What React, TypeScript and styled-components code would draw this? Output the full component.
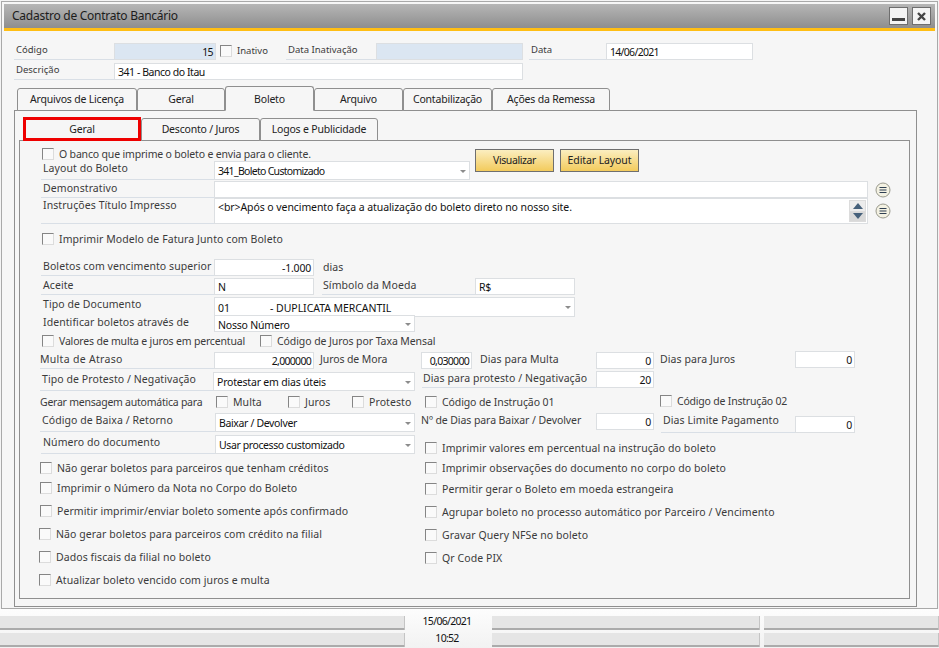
import React from "react";
import styled, { createGlobalStyle } from "styled-components";

const Global = createGlobalStyle`
  html, body { margin: 0; padding: 0; background: #f4f4f4; overflow: hidden; }
  * { box-sizing: border-box; }
  body { font-family: "Noto Sans", "Liberation Sans", sans-serif; font-size: 10.5px; color: #333; }
`;

const Page = styled.div`
  width: 939px; height: 648px; display: flex; flex-direction: column; background: #f4f4f4;
`;
const Win = styled.div`
  width: 937px; height: 608px; margin: 1px 0 0 1px; border: 1px solid #a9a9a9; padding: 2px;
  background: #f6f6f6; flex: none; display: flex; flex-direction: column;
`;
const TitleBar = styled.div`
  height: 27px; flex: none; padding: 0 4px 0 8px; display: flex; align-items: center; gap: 4px;
  background: linear-gradient(#b6b6b6, #8e8e8e); border-bottom: 3px solid #ffbe14;
`;
const Title = styled.div`
  flex: 1; font-size: 12px; color: #1c1c1c; padding-bottom: 1px; letter-spacing: -0.26px;
`;
const WinBtn = styled.div`
  width: 19px; height: 18px; border: 1px solid #6e6e6e; background: #f4f4f4;
  display: flex; align-items: center; justify-content: center;
`;
const Body = styled.div`
  flex: 1; padding: 12px 0 0 10px; display: flex; flex-direction: column;
`;
const Row = styled.div<{ $h: number; $mt?: number; $pl?: number }>`
  display: flex; align-items: flex-start; flex: none;
  height: ${p => p.$h}px; margin-top: ${p => p.$mt ?? 0}px; padding-left: ${p => p.$pl ?? 0}px;
`;
const Label = styled.div<{ $w: number; $h?: number; $ml?: number; $pl?: number; $plain?: boolean; $mt?: number; $small?: boolean; $ls?: number }>`
  width: ${p => p.$w}px; flex: none; height: ${p => p.$h ?? 17}px;
  margin-left: ${p => p.$ml ?? 0}px; margin-top: ${p => p.$mt ?? 0}px;
  padding-left: ${p => p.$pl ?? 2}px; line-height: 14px; white-space: nowrap; color: #3b3b3b;
  font-size: ${p => (p.$small ? 9.5 : 10.5)}px;
  letter-spacing: ${p => p.$ls ?? (p.$small ? 0 : 0.08)}px;
  border-bottom: 1px solid ${p => (p.$plain ? "transparent" : "#d9dfe6")};
`;
const Field = styled.div<{ $w: number; $h?: number; $right?: boolean; $blue?: boolean; $mt?: number; $ml?: number; $ls?: number; $lh?: number }>`
  position: relative; width: ${p => p.$w}px; height: ${p => p.$h ?? 17}px; flex: none;
  margin-top: ${p => p.$mt ?? 0}px; margin-left: ${p => p.$ml ?? 0}px;
  background: ${p => (p.$blue ? "#dbe6f2" : "#fff")}; border: 1px solid #dcdfe2;
  padding: ${p => (p.$right ? "0 2px 0 0" : "0 0 0 3px")}; text-align: ${p => (p.$right ? "right" : "left")};
  font-size: 10.5px; line-height: ${p => p.$lh ?? p.$h ?? 17}px; color: #111; white-space: pre;
  letter-spacing: ${p => p.$ls ?? -0.2}px;
`;
const Arrow = styled.i`
  position: absolute; right: 3px; top: 50%; margin-top: -1px; width: 0; height: 0;
  border-left: 3px solid transparent; border-right: 3px solid transparent; border-top: 3px solid #8c8c8c;
`;
const Box = styled.span`
  width: 12px; height: 12px; flex: none; background: #fafafa;
  border: 1px solid #dcdcdc; border-top-color: #858585; border-left-color: #858585;
`;
const Check = styled.label<{ $w?: number; $ml?: number; $mt?: number; $small?: boolean; $ls?: number }>`
  display: flex; align-items: center; gap: 5px; height: 14px; flex: none;
  width: ${p => (p.$w ? `${p.$w}px` : "auto")};
  margin-left: ${p => p.$ml ?? 0}px; margin-top: ${p => p.$mt ?? 0}px;
  white-space: nowrap; color: #3b3b3b; line-height: 14px;
  font-size: ${p => (p.$small ? 9.5 : 10.5)}px;
  letter-spacing: ${p => p.$ls ?? (p.$small ? 0 : 0.08)}px;
`;
const TabBar = styled.div<{ $ml: number; $h: number }>`
  display: flex; align-items: flex-end; flex: none; height: ${p => p.$h}px; margin-left: ${p => p.$ml}px;
  position: relative; z-index: 1; margin-bottom: -1px;
`;
const Tab = styled.div<{ $w: number; $active?: boolean }>`
  width: ${p => p.$w}px; height: ${p => (p.$active ? 25 : 23)}px; flex: none;
  border: 1px solid #8f8f8f; border-radius: 3px 3px 0 0; background: #f6f6f6;
  ${p => (p.$active ? "border-bottom-color: #f6f6f6;" : "")}
  text-align: center; line-height: ${p => (p.$active ? 25 : 21)}px; color: #222; letter-spacing: -0.2px;
`;
const SubTab = styled.div<{ $w: number; $marked?: boolean }>`
  width: ${p => p.$w}px; height: ${p => (p.$marked ? 24 : 23)}px; flex: none; background: #f6f6f6;
  border: ${p => (p.$marked ? "3px solid #ee0000" : "1px solid #8f8f8f")};
  border-radius: ${p => (p.$marked ? "0" : "3px 3px 0 0")};
  text-align: center; line-height: ${p => (p.$marked ? 18 : 21)}px; color: #222; letter-spacing: -0.2px;
`;
const Panel = styled.div`
  width: 903px; height: 497px; flex: none; border: 1px solid #8f8f8f; background: #f6f6f6; padding-top: 7px;
`;
const Inner = styled.div`
  width: 891px; height: 459px; margin-left: 4px; border: 1px solid #8f8f8f; padding-left: 0;
  display: flex; flex-direction: column;
`;
const TopBlock = styled.div`
  display: flex; flex: none;
`;
const TopLeft = styled.div`
  width: 450px; flex: none; display: flex; flex-direction: column;
`;
const Btn = styled.div<{ $w: number; $ml: number; $ls?: number }>`
  width: ${p => p.$w}px; margin-left: ${p => p.$ml}px; margin-top: 8px; height: 23px;
  border: 1px solid #6f6f6f; background: linear-gradient(#fbeec0, #f3cb5c);
  text-align: center; line-height: 21px; color: #222; flex: none; letter-spacing: ${p => p.$ls ?? -0.1}px;
`;
const Round = styled.svg`
  width: 16px; height: 16px; margin-left: 7px; flex: none; align-self: center;
`;
const Scroll = styled.div`
  position: absolute; right: 1px; top: 1px; bottom: 1px; width: 17px; display: flex; flex-direction: column;
  gap: 1px; background: #dcdcdc; padding: 1px;
`;
const ScrollBtn = styled.div<{ $down?: boolean }>`
  flex: 1; display: flex; align-items: center; justify-content: center;
  background: ${p => (p.$down ? "#d9d9d9" : "#ececec")};
  &::after {
    content: ""; width: 0; height: 0; border-left: 5px solid transparent; border-right: 5px solid transparent;
    ${p => (p.$down ? "border-top: 6px solid #45607a;" : "border-bottom: 6px solid #45607a;")}
  }
`;
const Note = styled.span<{ $ml: number; $mt?: number }>`
  margin-left: ${p => p.$ml}px; margin-top: ${p => p.$mt ?? 0}px; color: #3b3b3b; letter-spacing: 0.08px; line-height: 14px;
`;
const Split = styled.div`
  display: flex; flex: none;
`;
const Column = styled.div<{ $w: number; $ml?: number }>`
  width: ${p => p.$w}px; margin-left: ${p => p.$ml ?? 0}px; flex: none; display: flex; flex-direction: column;
`;
const Status = styled.div`
  flex: 1; padding-top: 7px; background: linear-gradient(#fdfdfd, #f2f2f2);
  display: flex; flex-direction: column; gap: 3px;
`;
const StatusRow = styled.div`
  display: flex; height: 14px; flex: none;
`;
const Cell = styled.div<{ $w: number; $ml?: number }>`
  width: ${p => p.$w}px; margin-left: ${p => p.$ml ?? 0}px; flex: none; background: #e5e5e5;
  border-bottom: 2px solid #ababab; border-right: 1px solid #c4c4c4; border-radius: 0 0 1px 0;
`;
const Clock = styled.div`
  width: 87px; padding-right: 3px; flex: none; text-align: center; line-height: 10px; font-size: 10.5px; color: #111; letter-spacing: -0.7px;
`;

const Dots = () => (
  <Round viewBox="0 0 16 16">
    <circle cx="8" cy="8" r="7" fill="#f3f1e2" stroke="#9a9a8e" />
    <path d="M4.5 5.5h7M4.5 8h7M4.5 10.5h7" stroke="#2f3f52" strokeWidth="1.1" />
  </Round>
);
const Cb = ({ children, ...rest }: React.ComponentProps<typeof Check>) => (
  <Check {...rest}><Box />{children}</Check>
);

export default function App() {
  return (
    <Page>
      <Global />
      <Win>
        <TitleBar>
          <Title>Cadastro de Contrato Bancário</Title>
          <WinBtn>
            <svg width="15" height="15" viewBox="0 0 15 15"><rect x="1" y="9" width="13" height="3" fill="#444" /></svg>
          </WinBtn>
          <WinBtn>
            <svg width="13" height="13" viewBox="0 0 13 13"><path d="M3 3l7 7M10 3l-7 7" stroke="#444" strokeWidth="2.4" /></svg>
          </WinBtn>
        </TitleBar>
        <Body>
          <Row $h={17}>
            <Label $w={100} $small>Código</Label>
            <Field $w={102} $blue $right $ls={-0.6}>15</Field>
            <Cb $w={66} $ml={4} $mt={1} $small>Inativo</Cb>
            <Label $w={90} $small>Data Inativação</Label>
            <Field $w={147} $blue />
            <Label $w={77} $ml={6} $small>Data</Label>
            <Field $w={147} $ls={-0.7}>14/06/2021</Field>
          </Row>
          <Row $h={17} $mt={3}>
            <Label $w={100} $small>Descrição</Label>
            <Field $w={409} $ls={-0.45}>341 - Banco do Itau</Field>
          </Row>
          <TabBar $ml={3} $h={31}>
            <Tab $w={120}>Arquivos de Licença</Tab>
            <Tab $w={88}>Geral</Tab>
            <Tab $w={89} $active>Boleto</Tab>
            <Tab $w={89}>Arquivo</Tab>
            <Tab $w={89}>Contabilização</Tab>
            <Tab $w={118}>Ações da Remessa</Tab>
          </TabBar>
          <Panel>
            <TabBar $ml={8} $h={23}>
              <SubTab $w={118} $marked>Geral</SubTab>
              <SubTab $w={119}>Desconto / Juros</SubTab>
              <SubTab $w={118}>Logos e Publicidade</SubTab>
            </TabBar>
            <Inner>
              <TopBlock>
                <TopLeft>
                  <Row $h={14} $mt={6} $pl={22}>
                    <Cb $ls={-0.17}>O banco que imprime o boleto e envia para o cliente.</Cb>
                  </Row>
                  <Row $h={19} $pl={21}>
                    <Label $w={173} $h={19}>Layout do Boleto</Label>
                    <Field $w={256} $h={19} $ls={-0.7}>341_Boleto Customizado<Arrow /></Field>
                  </Row>
                </TopLeft>
                <Btn $w={79} $ml={5} $ls={-0.4}>Visualizar</Btn>
                <Btn $w={79} $ml={6}>Editar Layout</Btn>
              </TopBlock>
              <Row $h={17} $mt={1} $pl={21}>
                <Label $w={173}>Demonstrativo</Label>
                <Field $w={654} />
                <Dots />
              </Row>
              <Row $h={26} $pl={21}>
                <Label $w={173} $h={26}>Instruções Título Impresso</Label>
                <Field $w={654} $h={26} $ls={-0.08} $lh={16}>
                  {"<br>Após o vencimento faça a atualização do boleto direto no nosso site."}
                  <Scroll><ScrollBtn /><ScrollBtn $down /></Scroll>
                </Field>
                <Dots />
              </Row>
              <Row $h={14} $mt={8} $pl={22}>
                <Cb>Imprimir Modelo de Fatura Junto com Boleto</Cb>
              </Row>
              <Row $h={17} $mt={13} $pl={21}>
                <Label $w={173}>Boletos com vencimento superior</Label>
                <Field $w={100} $right>-1.000</Field>
                <Note $ml={9} $mt={1}>dias</Note>
              </Row>
              <Row $h={17} $mt={2} $pl={21}>
                <Label $w={173}>Aceite</Label>
                <Field $w={100}>N</Field>
                <Label $w={153} $ml={8} $pl={1}>Símbolo da Moeda</Label>
                <Field $w={100}>R$</Field>
              </Row>
              <Row $h={20} $mt={2} $pl={21}>
                <Label $w={173} $plain>Tipo de Documento</Label>
                <Field $w={361} $h={20} $ls={-0.05}>{"01               - DUPLICATA MERCANTIL"}<Arrow /></Field>
              </Row>
              <Row $h={17} $mt={-2} $pl={21}>
                <Label $w={173} $plain>Identificar boletos através de</Label>
                <Field $w={201} $lh={19}>Nosso Número<Arrow /></Field>
              </Row>
              <Row $h={14} $mt={2} $pl={22}>
                <Cb $w={218} $ls={-0.18}>Valores de multa e juros em percentual</Cb>
                <Cb $ls={-0.08}>Código de Juros por Taxa Mensal</Cb>
              </Row>
              <Row $h={17} $mt={4} $pl={20}>
                <Label $w={174} $pl={0} $ls={0.3}>Multa de Atraso</Label>
                <Field $w={100} $right $ls={-0.7}>2,000000</Field>
                <Label $w={102} $ml={5} $pl={1} $plain $ls={-0.1}>Juros de Mora</Label>
                <Field $w={51} $right $ls={-0.7}>0,030000</Field>
                <Label $w={116} $ml={8} $pl={0} $plain>Dias para Multa</Label>
                <Field $w={58} $right>0</Field>
                <Label $w={137} $ml={4} $pl={2} $plain>Dias para Juros</Label>
                <Field $w={60} $mt={-1} $right>0</Field>
              </Row>
              <Row $h={19} $mt={3} $pl={20}>
                <Label $w={173} $h={19} $pl={2}>Tipo de Protesto / Negativação</Label>
                <Field $w={202} $h={19}>Protestar em dias úteis<Arrow /></Field>
                <Label $w={174} $ml={7} $pl={1} $mt={-1}>Dias para protesto / Negativação</Label>
                <Field $w={58} $mt={-1} $right>20</Field>
              </Row>
              <Row $h={14} $mt={4} $pl={20}>
                <Label $w={176} $pl={0} $plain $h={14} $ls={-0.24}>Gerar mensagem automática para</Label>
                <Cb $w={72}>Multa</Cb>
                <Cb $w={64}>Juros</Cb>
                <Cb $w={73}>Protesto</Cb>
                <Cb $w={235} $ls={-0.1}>Código de Instrução 01</Cb>
                <Cb $mt={-1} $ls={-0.2}>Código de Instrução 02</Cb>
              </Row>
              <Row $h={20} $mt={4} $pl={20}>
                <Label $w={175} $h={19}>Código de Baixa / Retorno</Label>
                <Field $w={200} $h={19} $ls={-0.35}>Baixar / Devolver<Arrow /></Field>
                <Label $w={177} $ml={4} $plain $ls={-0.08}>Nº de Dias para Baixar / Devolver</Label>
                <Field $w={58} $right>0</Field>
                <Label $w={134} $ml={7} $h={20}>Dias Limite Pagamento</Label>
                <Field $w={60} $mt={3} $right>0</Field>
              </Row>
              <Split>
                <Column $w={395}>
                  <Row $h={19} $mt={2} $pl={21}>
                    <Label $w={174} $h={19}>Número do documento</Label>
                    <Field $w={200} $h={19} $ls={-0.4}>Usar processo customizado<Arrow /></Field>
                  </Row>
                  <Row $h={14} $mt={7} $pl={20}><Cb>Não gerar boletos para parceiros que tenham créditos</Cb></Row>
                  <Row $h={14} $mt={6} $pl={20}><Cb>Imprimir o Número da Nota no Corpo do Boleto</Cb></Row>
                  <Row $h={14} $mt={9} $pl={20}><Cb>Permitir imprimir/enviar boleto somente após confirmado</Cb></Row>
                  <Row $h={14} $mt={9} $pl={19}><Cb>Não gerar boletos para parceiros com crédito na filial</Cb></Row>
                  <Row $h={14} $mt={9} $pl={19}><Cb>Dados fiscais da filial no boleto</Cb></Row>
                  <Row $h={14} $mt={9} $pl={19}><Cb>Atualizar boleto vencido com juros e multa</Cb></Row>
                </Column>
                <Column $w={450} $ml={10}>
                  <Row $h={14} $mt={8}><Cb>Imprimir valores em percentual na instrução do boleto</Cb></Row>
                  <Row $h={14} $mt={6}><Cb>Imprimir observações do documento no corpo do boleto</Cb></Row>
                  <Row $h={14} $mt={7}><Cb>Permitir gerar o Boleto em moeda estrangeira</Cb></Row>
                  <Row $h={14} $mt={9}><Cb>Agrupar boleto no processo automático por Parceiro / Vencimento</Cb></Row>
                  <Row $h={14} $mt={9}><Cb>Gravar Query NFSe no boleto</Cb></Row>
                  <Row $h={14} $mt={9}><Cb>Qr Code PIX</Cb></Row>
                </Column>
              </Split>
            </Inner>
          </Panel>
        </Body>
      </Win>
      <Status>
        <StatusRow>
          <Cell $w={405} />
          <Clock>15/06/2021</Clock>
          <Cell $w={268} />
          <Cell $w={175} $ml={4} />
        </StatusRow>
        <StatusRow>
          <Cell $w={405} />
          <Clock>10:52</Clock>
          <Cell $w={268} />
          <Cell $w={175} $ml={4} />
        </StatusRow>
      </Status>
    </Page>
  );
}
